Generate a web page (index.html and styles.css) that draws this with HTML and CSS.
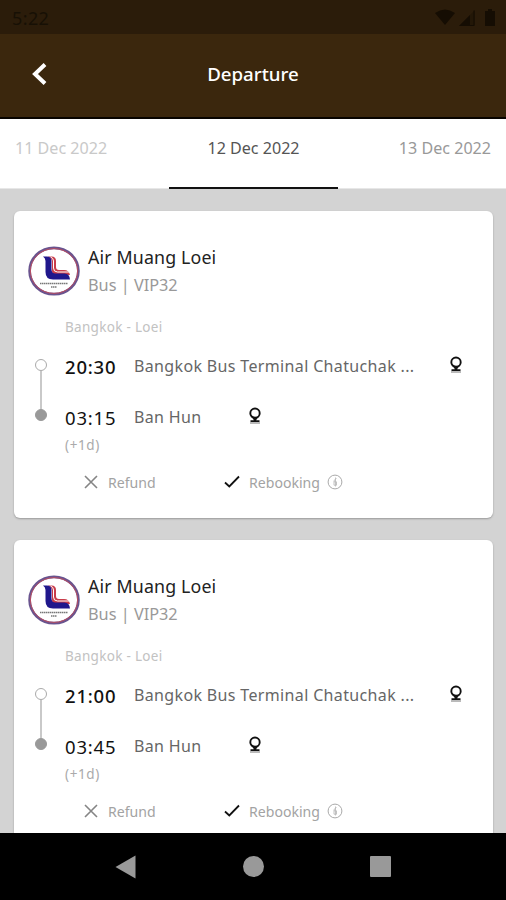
FILE: index.html
```html
<!DOCTYPE html>
<html lang="en">
<head>
<meta charset="utf-8">
<title>Departure</title>
<link rel="stylesheet" href="styles.css">
</head>
<body>
<svg width="0" height="0" class="defs" aria-hidden="true">
  <symbol id="logo" viewBox="0 0 52 52">
    <ellipse cx="26" cy="26" rx="24.400" ry="23.200" fill="#fff" stroke="#69548f" stroke-width="2.700"/>
    <ellipse cx="26" cy="26" rx="23.600" ry="22.400" fill="none" stroke="#b84d62" stroke-width="1"/>
    <path d="M20 11.500h3.500q4.500 0 4.500 4.500v6q0 3 3 3h5q5 0 6 5H28q-4 0-4-4v-9q0-4-4-5.500z" fill="#c83c4a"/>
    <path d="M22.500 12q3 1 3 4v7q0 4 4 4h12" fill="none" stroke="#fff" stroke-width="1"/>
    <path d="M15 11.500h4q4.500 0 4.500 4.500v8q0 4.500 4 4.500h9q5 0 5.500 6H25q-7.500 0-7.500-7.500V16q0-3-2.500-4.500z" fill="#20178c"/>
    <path d="M12 38.500h28M23 42h6" stroke="#777" stroke-width="1.300" stroke-dasharray="1.500 .5"/>
  </symbol>
  <symbol id="pin" viewBox="0 0 14 18">
    <circle cx="7" cy="6.200" r="4.700" fill="none" stroke="#111" stroke-width="1.900"/>
    <path d="M4 9.800h6L8.200 13.200h3.300V15h-9v-1.800h3.300z" fill="#111"/>
    <path d="M2 16h10" stroke="#777" stroke-width="1"/>
  </symbol>
  <symbol id="cross" viewBox="0 0 14 14">
    <path d="M1 1l12 12M13 1L1 13" stroke="#858585" stroke-width="1.600"/>
  </symbol>
  <symbol id="check" viewBox="0 0 16 14">
    <path d="M1 7.500l4.300 4L15 1.500" fill="none" stroke="#111" stroke-width="1.800"/>
  </symbol>
  <symbol id="fee" viewBox="0 0 16 16">
    <circle cx="8" cy="8" r="6.900" fill="none" stroke="#aaa" stroke-width="1"/>
    <path d="M9.500 4.500L7 6.500v4.700h2.500V7.800H7M8.500 3.500v9" fill="none" stroke="#bbb" stroke-width=".9"/>
  </symbol>
</svg>
<div class="screen">
  <div class="status">
    <span class="clock">5:22</span>
    <svg class="signals" width="62" height="18" viewBox="0 0 62 18" fill="#150d03">
      <path d="M-2 4Q8-3 18 4L8 16z"/>
      <path d="M22 17L38 1v16z" opacity=".35"/><path d="M22 17L33 6v11z"/><path d="M37 1.500v15h-4" fill="none" stroke="#150d03"/>
      <path d="M48 2h3V0h4v2h3v15H48z"/>
    </svg>
  </div>
  <header class="header">
    <svg class="back" width="18" height="26" viewBox="0 0 18 26"><path d="M15 3.500L5 13l10 9.500" fill="none" stroke="#fff" stroke-width="4"/></svg>
    <h1 class="title">Departure</h1>
  </header>
  <nav class="dates">
    <span class="date past">11 Dec 2022</span>
    <span class="date current">12 Dec 2022</span>
    <span class="date next">13 Dec 2022</span>
  </nav>
  <main class="trips">
    <article class="card">
      <div class="brand">
        <svg class="logo"><use href="#logo"/></svg>
        <div><div class="name">Air Muang Loei</div><div class="kind">Bus | VIP32</div></div>
      </div>
      <div class="route">Bangkok - Loei</div>
      <div class="journey">
        <div class="track"><i class="start"></i><i class="line"></i><i class="end"></i></div>
        <div class="stops">
          <div class="stop"><span class="time">20:30</span><span class="place wide">Bangkok Bus Terminal Chatuchak ...</span><svg class="pin"><use href="#pin"/></svg></div>
          <div class="stop"><span class="time arrive">03:15</span><span class="place">Ban Hun</span><svg class="pin"><use href="#pin"/></svg></div>
          <div class="offset">(+1d)</div>
        </div>
      </div>
      <div class="policies">
        <div class="policy refund"><svg class="cross"><use href="#cross"/></svg><span>Refund</span></div>
        <div class="policy"><svg class="check"><use href="#check"/></svg><span class="rebooking">Rebooking</span><svg class="fee"><use href="#fee"/></svg></div>
      </div>
    </article>
    <article class="card">
      <div class="brand">
        <svg class="logo"><use href="#logo"/></svg>
        <div><div class="name">Air Muang Loei</div><div class="kind">Bus | VIP32</div></div>
      </div>
      <div class="route">Bangkok - Loei</div>
      <div class="journey">
        <div class="track"><i class="start"></i><i class="line"></i><i class="end"></i></div>
        <div class="stops">
          <div class="stop"><span class="time">21:00</span><span class="place wide">Bangkok Bus Terminal Chatuchak ...</span><svg class="pin"><use href="#pin"/></svg></div>
          <div class="stop"><span class="time arrive">03:45</span><span class="place">Ban Hun</span><svg class="pin"><use href="#pin"/></svg></div>
          <div class="offset">(+1d)</div>
        </div>
      </div>
      <div class="policies">
        <div class="policy refund"><svg class="cross"><use href="#cross"/></svg><span>Refund</span></div>
        <div class="policy"><svg class="check"><use href="#check"/></svg><span class="rebooking">Rebooking</span><svg class="fee"><use href="#fee"/></svg></div>
      </div>
    </article>
  </main>
  <footer class="system">
    <svg width="22" height="26" viewBox="0 0 22 26"><path d="M.5 13L20.500 1.500v23z" fill="#999"/></svg>
    <i class="home"></i>
    <i class="recent"></i>
  </footer>
</div>
</body>
</html>
```
FILE: styles.css
```css
* { box-sizing: border-box; }
body { margin: 0; font-family: "Noto Sans", sans-serif; }
.defs { position: absolute; }
svg { display: block; flex: none; }
.screen { width: 506px; height: 900px; display: flex; flex-direction: column; overflow: hidden; background: #d3d3d3; }
.status { height: 34px; flex: none; background: #2b1c0a; display: flex; align-items: center; justify-content: space-between; padding: 2px 7px 0 12px; color: #171005; }
.signals { overflow: visible; }
.clock { font-size: 18px; letter-spacing: .4px; }
.header { height: 85px; flex: none; background: #3b270d; border-bottom: 2px solid #080400; display: grid; grid-template-columns: 48px 1fr 48px; align-items: center; }
.back { justify-self: end; margin-top: -4px; }
.title { margin: -4px 0 0; color: #fff; font-size: 18.7px; font-weight: 500; text-align: center; }
.dates { height: 70px; flex: none; background: #fff; display: grid; grid-template-columns: 169px 169px 168px; line-height: 58px; font-size: 16.1px; border-bottom: 1px solid #e7e7e7; }
.date { height: 70px; white-space: nowrap; }
.past { padding-left: 15px; color: #c9c9c9; }
.current { text-align: center; color: #555; border-bottom: 2px solid #111; }
.next { text-align: right; padding-right: 15px; color: #999; }
.trips { flex: 1; min-height: 0; overflow: hidden; padding: 22px 13px 0 14px; }
.card { height: 307px; margin-bottom: 22px; padding-top: 31px; background: #fff; border-radius: 6px; box-shadow: 0 1px 2px #999; }
.brand { display: flex; height: 58px; padding-left: 14px; gap: 8px; line-height: 29px; white-space: nowrap; }
.logo { width: 52px; height: 52px; margin-top: 3px; }
.name { font-size: 17.8px; color: #222; letter-spacing: .15px; padding-top: 1px; height: 29px; }
.kind { font-size: 16.3px; color: #999; }
.route { margin: 6px 0 0 51px; height: 42px; line-height: 42px; font-size: 13.5px; color: #c2c2c2; letter-spacing: .3px; }
.journey { display: flex; height: 109px; }
.track { width: 51px; padding: 11px 0 0 3px; display: flex; flex-direction: column; align-items: center; }
.start, .end { width: 12px; height: 12px; border-radius: 50%; border: 1.5px solid #aaa; }
.end { background: #999; border-color: #999; }
.line { width: 2px; height: 38px; background: #c9c9c9; }
.stop { height: 36px; display: flex; align-items: center; white-space: nowrap; }
.stop + .stop { margin-top: 15px; }
.time { width: 69px; font-size: 18.5px; font-weight: 500; letter-spacing: .8px; color: #111; }
.arrive { font-weight: 400; }
.place { width: 114px; font-size: 16px; color: #666; letter-spacing: .35px; }
.wide { width: 315px; }
.pin { width: 14px; height: 18px; margin-top: -2px; }
.offset { height: 22px; line-height: 21px; font-size: 13.5px; color: #aaa; letter-spacing: .6px; }
.policies { display: flex; height: 36px; margin-top: 7px; padding-left: 70px; font-size: 14.1px; color: #a3a3a3; }
.policy { display: flex; align-items: center; }
.refund { width: 140px; }
.cross { width: 14px; height: 14px; margin-right: 10px; }
.check { width: 16px; height: 14px; margin-right: 9px; }
.fee { width: 16px; height: 16px; margin-left: 7px; }
.system { height: 67px; flex: none; background: #000; display: flex; align-items: center; padding-left: 115px; }
.home { width: 21px; height: 21px; border-radius: 50%; background: #999; margin-left: 106px; }
.recent { width: 21px; height: 21px; border-radius: 1px; background: #999; margin-left: 106px; }
```
